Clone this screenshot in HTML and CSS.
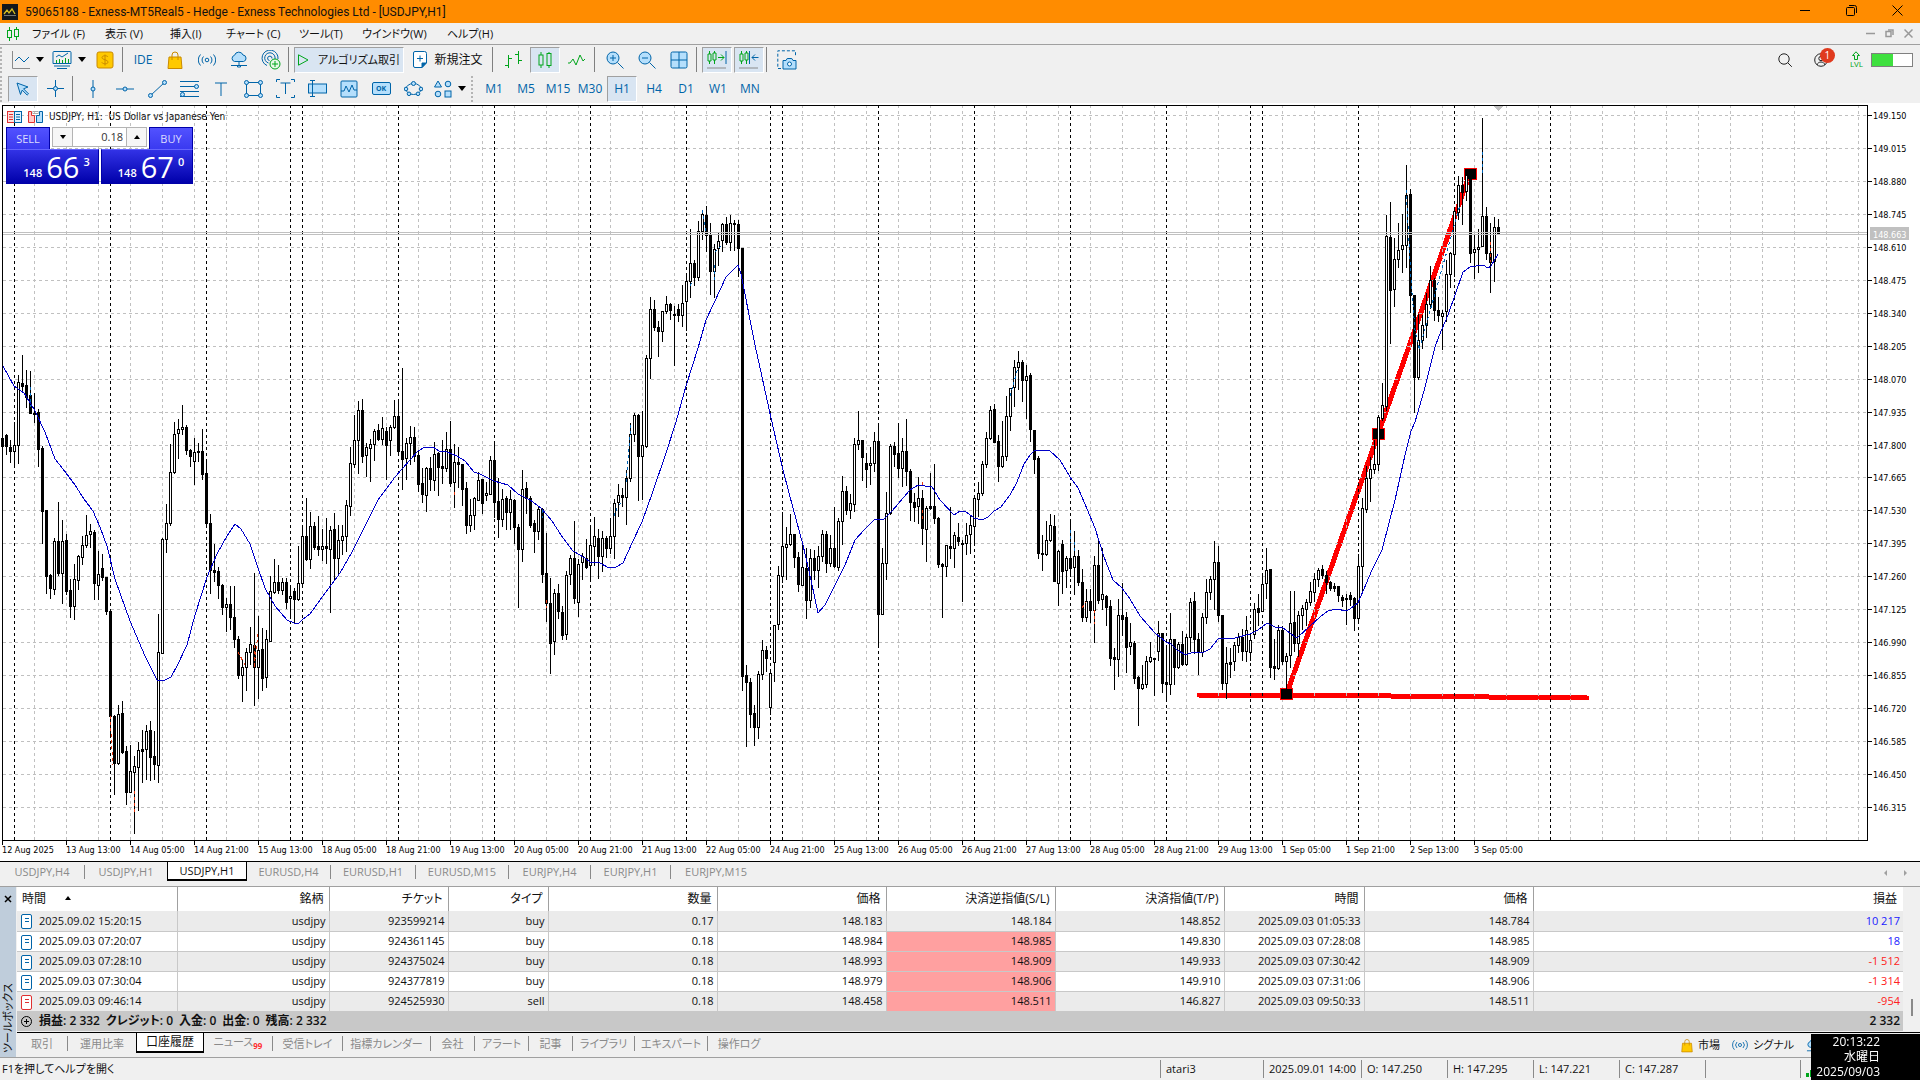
FILE: index.html
```html
<!DOCTYPE html>
<html lang="ja">
<head>
    <meta charset="UTF-8">
    <meta name="viewport" content="width=device-width, initial-scale=1.0">
    <title>59065188 - Exness-MT5Real5 - Hedge - Exness Technologies Ltd - [USDJPY,H1]</title>
    <link rel="stylesheet" href="styles.css">
</head>
<body>
    <header class="titlebar">
        <svg class="app-icon" width="16" height="16" viewBox="0 0 16 16"><rect width="16" height="16" fill="#14181c"/><path d="M2 10l3-4 2 3 3-4 3 5" fill="none" stroke="#d9c021" stroke-width="1.3"/><path d="M2 11.500h12" stroke="#777" stroke-width="1"/></svg>
        <h1>59065188 - Exness-MT5Real5 - Hedge - Exness Technologies Ltd - [USDJPY,H1]</h1>
        <div class="window-buttons">
            <button type="button" aria-label="Minimize"><svg width="11" height="11" viewBox="0 0 11 11"><path d="M0 5.500h10"/></svg></button>
            <button type="button" aria-label="Restore"><svg width="11" height="11" viewBox="0 0 11 11"><rect x=".5" y="2.500" width="8" height="8" rx="1"/><path d="M3 .5h5.500a2 2 0 0 1 2 2V8"/></svg></button>
            <button type="button" aria-label="Close"><svg width="11" height="11" viewBox="0 0 11 11"><path d="M.5.5l10 10M10.500.5l-10 10"/></svg></button>
        </div>
    </header>

    <nav class="menubar">
        <svg width="12" height="14" viewBox="0 0 12 14" fill="none" stroke="#00a51b" stroke-width="1"><path d="M2.500 0v3M2.500 11v3M9.500 0v2M9.500 10v3"/><rect x=".5" y="3.500" width="4" height="7"/><rect x="7.500" y="2.500" width="4" height="7"/></svg>
        <button type="button">ファイル (F)</button>
        <button type="button">表示 (V)</button>
        <button type="button">挿入(I)</button>
        <button type="button">チャート (C)</button>
        <button type="button">ツール(T)</button>
        <button type="button">ウインドウ(W)</button>
        <button type="button">ヘルプ(H)</button>
        <div class="child-buttons">
            <button type="button" aria-label="Minimize chart"><svg width="9" height="9" viewBox="0 0 9 9"><path d="M0 4.500h9"/></svg></button>
            <button type="button" aria-label="Restore chart"><svg width="9" height="9" viewBox="0 0 9 9"><rect x="1" y="2.500" width="5" height="5"/><path d="M3 1h5v5"/></svg></button>
            <button type="button" aria-label="Close chart"><svg width="9" height="9" viewBox="0 0 9 9"><path d="M.5.5l8 8M8.500.5l-8 8"/></svg></button>
        </div>
    </nav>

    <div class="toolbar">
        <span class="grip"></span>
        <button type="button" class="wide" aria-label="Chart type"><svg width="18" height="18" viewBox="0 0 18 18"><path d="M.5 0v17.500H18" stroke="#8a8a8a"/><path d="M3 10l4-4 5 5 5-5"/></svg><i class="arrow"></i></button>
        <button type="button" class="wide" aria-label="Indicators"><svg width="20" height="18" viewBox="0 0 20 18"><path d="M3 12.500h14l2 0v-11a1 1 0 0 0-1-1H2a1 1 0 0 0-1 1v11zM2 15h16M5 17.500h10"/><path d="M4 6l3-2 3 2 6-4"/><path d="M4.500 12V9M7.500 12V8M10.500 12V9M13.500 12V7M16.500 12V8" stroke="#00a51b"/></svg><i class="arrow"></i></button>
        <button type="button" aria-label="Market"><svg width="18" height="18" viewBox="0 0 18 18"><rect x="1" y="1" width="16" height="16" rx="2" fill="#ffc900" stroke="#c98a00"/><path d="M12 6c-1-2-6-1.500-6 .5C6 9 12 8.500 12 11.200c0 2-5 2.200-6.200.2M9 3.500v11" stroke="#c98a00"/></svg></button>
        <span class="sep"></span>
        <button type="button" class="text">IDE</button>
        <button type="button" aria-label="Store"><svg width="16" height="18" viewBox="0 0 16 18"><path d="M2 6h12l1 11.500H1z" fill="#ffc900" stroke="#c98a00"/><path d="M5 9V4a3 3 0 0 1 6 0v5" stroke="#c98a00"/></svg></button>
        <button type="button" aria-label="Signals"><svg width="18" height="14" viewBox="0 0 18 14"><circle cx="9" cy="7" r="1.800"/><path d="M5.500 3.500a5 5 0 0 0 0 7M12.500 3.500a5 5 0 0 1 0 7M2.500 1.500a8 8 0 0 0 0 11M15.500 1.500a8 8 0 0 1 0 11"/></svg></button>
        <button type="button" aria-label="VPS"><svg width="18" height="17" viewBox="0 0 18 17"><path d="M4.500 10.500a3.200 3.200 0 0 1 0-6.200A4.500 4.500 0 0 1 13 4a3.300 3.300 0 0 1 .5 6.500z" fill="#b5dffc"/><path d="M9 10.500v4M1 14.500h16M7.500 14.500h3v1.500h-3z"/></svg></button>
        <button type="button" aria-label="Copy signals"><svg width="20" height="20" viewBox="0 0 20 20"><path d="M6 15.500A8 8 0 1 1 17 9M7.500 13A5.200 5.200 0 1 1 14 9M8.500 10.500a2.200 2.200 0 1 1 2.500-2"/><circle cx="14" cy="14" r="5" fill="#e8f8e8" stroke="#00a51b"/><path d="M14 11v6M11 14h6" stroke="#00a51b"/></svg></button>
        <span class="sep"></span>
        <button type="button" class="algo on"><svg width="11" height="12" viewBox="0 0 11 12"><path d="M.5.800l9.500 5.200-9.500 5.200z" stroke="#00a51b"/></svg>アルゴリズム取引</button>
        <button type="button" class="order"><svg width="14" height="17" viewBox="0 0 14 17"><path d="M2 .5h9.500a2 2 0 0 1 2 2V12L9 16.500H2a1.500 1.500 0 0 1-1.500-1.500V2A1.500 1.500 0 0 1 2 .5z" fill="#fff"/><path d="M13 12H9v4.500z" fill="#0064a8"/><path d="M7 4.500v6M4 7.500h6"/></svg>新規注文</button>
        <span class="sep"></span>
        <button type="button" class="green" aria-label="Bar chart"><svg width="17" height="17" viewBox="0 0 17 17"><path d="M3.500 4v13M3.500 7.500H7M0 14.500h3.500M13.500 0v13M10 3.500h3.500M13.500 9.500H17"/></svg></button>
        <button type="button" class="green on" aria-label="Candlesticks"><svg width="14" height="16" viewBox="0 0 14 16"><path d="M3 0v3M3 13v3M11 0v2M11 14v2"/><rect x="1" y="3" width="4" height="10"/><rect x="9" y="1.500" width="4" height="12"/></svg></button>
        <button type="button" class="green" aria-label="Line chart"><svg width="18" height="12" viewBox="0 0 18 12"><path d="M0 9h2l3-4 3 6 4-10 3 6 2-2"/></svg></button>
        <span class="sep"></span>
        <button type="button" aria-label="Zoom in"><svg width="18" height="18" viewBox="0 0 18 18"><circle cx="7" cy="7" r="6" fill="#b5dffc"/><path d="M11.500 11.500l6 6M7 4v6M4 7h6"/></svg></button>
        <button type="button" aria-label="Zoom out"><svg width="18" height="18" viewBox="0 0 18 18"><circle cx="7" cy="7" r="6" fill="#b5dffc"/><path d="M11.500 11.500l6 6M4 7h6"/></svg></button>
        <button type="button" aria-label="Tile windows"><svg width="18" height="18" viewBox="0 0 18 18"><rect x="1" y="1" width="16" height="16" rx="1.500" fill="#b5dffc"/><path d="M9 1v16M1 9h16"/></svg></button>
        <span class="sep"></span>
        <button type="button" class="on" aria-label="Auto scroll"><svg width="20" height="19" viewBox="0 0 20 19"><path d="M2.500 1v13M7.500 1v13" stroke="#00a51b"/><path d="M1 4h3v7H1zM6 3h3v7H6zM11 7.500h6M14 4.500l3 3-3 3" stroke="#00a51b" fill="#d9e5f2"/><path d="M19 1v13"/><path d="M0 18h19" stroke="#8a8a8a"/></svg></button>
        <button type="button" class="on" aria-label="Chart shift"><svg width="20" height="19" viewBox="0 0 20 19"><path d="M2.500 1v13M7.500 1v13" stroke="#00a51b"/><path d="M1 4h3v7H1zM6 3h3v7H6z" stroke="#00a51b" fill="#d9e5f2"/><path d="M10.500 1v13M13 7.500h6.500M16 4.500l-3 3 3 3"/><path d="M0 18h19" stroke="#8a8a8a"/></svg></button>
        <span class="sep"></span>
        <button type="button" aria-label="Screenshot"><svg width="20" height="20" viewBox="0 0 20 20"><path d="M4 18.500H.8V.8h17.700V7" stroke-dasharray="3 2"/><path d="M6 10.500h3l1.200-2h4.600l1.200 2h3v8.500H6z" fill="#b5dffc"/><circle cx="12.500" cy="14" r="2" fill="#fff"/></svg></button>
        <div class="account">
            <button type="button" aria-label="Search"><svg width="14" height="14" viewBox="0 0 14 14"><circle cx="6" cy="6" r="5.200"/><path d="M9.800 9.800l4 4"/></svg></button>
            <button type="button" class="user" aria-label="Account"><svg width="14" height="14" viewBox="0 0 14 14"><circle cx="7" cy="7" r="6.300"/><circle cx="7" cy="5.500" r="2.200"/><path d="M3 12c1-4 7-4 8 0"/></svg><span class="badge">1</span></button>
            <span class="level"><svg width="8" height="9" viewBox="0 0 8 9"><path d="M.5 4.500L4 .8l3.500 3.700H5.500V8.500h-3v-4z"/></svg>LVL</span>
            <span class="battery"><span class="charge"></span></span>
        </div>
    </div>

    <div class="toolbar">
        <span class="grip"></span>
        <button type="button" class="on" aria-label="Cursor"><svg width="14" height="14" viewBox="0 0 14 14"><path d="M1 1l11 4-4.500 1.800 5 5-1.300 1.300-5-5L4.500 12.500z" fill="#b5dffc"/></svg></button>
        <button type="button" aria-label="Crosshair"><svg width="17" height="17" viewBox="0 0 17 17"><path d="M8.500 0v17M0 8.500h17"/><circle cx="8.500" cy="8.500" r="2" fill="#b5dffc"/></svg></button>
        <span class="sep"></span>
        <button type="button" aria-label="Vertical line"><svg width="18" height="18" viewBox="0 0 18 18"><path d="M9 0v18"/><circle cx="9" cy="9" r="2" fill="#b5dffc"/></svg></button>
        <button type="button" aria-label="Horizontal line"><svg width="18" height="18" viewBox="0 0 18 18"><path d="M0 9h18"/><circle cx="9" cy="9" r="2" fill="#b5dffc"/></svg></button>
        <button type="button" aria-label="Trend line"><svg width="19" height="18" viewBox="0 0 19 18"><path d="M2 16L17 2"/><circle cx="2.500" cy="15.500" r="2" fill="#b5dffc"/><circle cx="16.500" cy="2.500" r="2" fill="#b5dffc"/></svg></button>
        <button type="button" aria-label="Fibonacci"><svg width="19" height="18" viewBox="0 0 19 18"><path d="M0 1.500h19M0 6.500h19M0 11.500h19M0 16.500h19"/><circle cx="16.500" cy="6.500" r="2" fill="#b5dffc"/><circle cx="2.500" cy="14.500" r="2" fill="#b5dffc"/></svg></button>
        <button type="button" aria-label="Text"><svg width="14" height="14" viewBox="0 0 14 14"><path d="M1 1h12M7 1v13"/></svg></button>
        <button type="button" aria-label="Rectangle"><svg width="19" height="18" viewBox="0 0 19 18"><rect x="2.500" y="2.500" width="14" height="13"/><g fill="#b5dffc"><circle cx="2.500" cy="2.500" r="2"/><circle cx="16.500" cy="2.500" r="2"/><circle cx="2.500" cy="15.500" r="2"/><circle cx="16.500" cy="15.500" r="2"/></g></svg></button>
        <button type="button" aria-label="Text label"><svg width="19" height="19" viewBox="0 0 19 19"><path d="M.5 3V.5H4M.5 16v2.500H4M18.500 3V.5H15M18.500 16v2.500H15M4.500 4h10M9.500 4v11"/></svg></button>
        <button type="button" aria-label="Edit field"><svg width="19" height="17" viewBox="0 0 19 17"><rect x=".5" y="4" width="18" height="9" fill="#b5dffc"/><path d="M4.500 1v15M2 .5h5M2 16.500h5"/></svg></button>
        <button type="button" aria-label="Chart object"><svg width="18" height="18" viewBox="0 0 18 18"><rect x="1" y="1" width="16" height="16" rx="1" fill="#b5dffc"/><path d="M1 11h3l2-5 3 6 3-7 2 5h3"/></svg></button>
        <button type="button" aria-label="Button object"><span class="ok">OK</span></button>
        <button type="button" aria-label="Ellipse"><svg width="19" height="16" viewBox="0 0 19 16"><ellipse cx="9.500" cy="8" rx="7.500" ry="5.500"/><g fill="#b5dffc"><circle cx="9.500" cy="2.500" r="2"/><circle cx="2" cy="8" r="1.800"/><circle cx="17" cy="8" r="1.800"/><circle cx="5" cy="12.800" r="1.800"/><circle cx="14" cy="12.800" r="1.800"/></g></svg></button>
        <button type="button" class="wide" aria-label="Shapes"><svg width="18" height="18" viewBox="0 0 18 18"><g fill="#b5dffc"><path d="M4 1l3.500 6h-7z"/><circle cx="14" cy="4" r="2.800"/><circle cx="4" cy="14" r="2.800"/><rect x="11" y="11" width="6" height="6"/></g></svg><i class="arrow"></i></button>
        <span class="grip"></span>
        <button type="button" class="text">M1</button>
        <button type="button" class="text">M5</button>
        <button type="button" class="text">M15</button>
        <button type="button" class="text">M30</button>
        <button type="button" class="text on">H1</button>
        <button type="button" class="text">H4</button>
        <button type="button" class="text">D1</button>
        <button type="button" class="text">W1</button>
        <button type="button" class="text">MN</button>
    </div>

    <main class="chart">
        <svg class="plot" id="plot" role="img" aria-label="USDJPY H1"></svg>
        <div class="chart-title">
            <svg width="15" height="12" viewBox="0 0 15 12" fill="none"><rect x=".5" y=".5" width="7" height="11" fill="#fde0e0" stroke="#e03030"/><rect x="7.500" y=".5" width="7" height="11" fill="#e0f0fd" stroke="#0064a8"/><path d="M2 3.500h4M2 6h4M2 8.500h4" stroke="#e03030"/><path d="M9 3.500h4M9 6h4M9 8.500h4" stroke="#0064a8"/></svg>
            <svg width="15" height="12" viewBox="0 0 15 12"><path d="M.5.5h3v4h3v7h-6z" fill="#ffc9c9" stroke="#e03030"/><path d="M14.500.5h-3v4h-3v7h6z" fill="#b5dffc" stroke="#0064a8"/><rect x="5" y=".5" width="5" height="2" fill="none" stroke="#aaa"/></svg>
            <span>USDJPY, H1:&nbsp; US Dollar vs Japanese Yen</span>
        </div>
        <form class="one-click" onsubmit="event.preventDefault()">
            <button type="submit" class="side sell">SELL</button>
            <div class="volume">
                <button type="button" aria-label="Decrease volume"><i class="arrow"></i></button>
                <input type="text" value="0.18" aria-label="Volume">
                <button type="button" aria-label="Increase volume"><i class="arrow up"></i></button>
            </div>
            <button type="submit" class="side buy">BUY</button>
            <div class="quote"><small>148</small><b>66</b><sup>3</sup></div>
            <div class="quote"><small>148</small><b>67</b><sup>0</sup></div>
        </form>
    </main>

    <nav class="chart-tabs">
        <button type="button">USDJPY,H4</button>
        <button type="button">USDJPY,H1</button>
        <button type="button" class="active">USDJPY,H1</button>
        <button type="button">EURUSD,H4</button>
        <button type="button">EURUSD,H1</button>
        <button type="button">EURUSD,M15</button>
        <button type="button">EURJPY,H4</button>
        <button type="button">EURJPY,H1</button>
        <button type="button">EURJPY,M15</button>
        <span class="scroller"><i></i><i></i></span>
    </nav>

    <section class="toolbox">
        <div class="toolbox-side">
            <button type="button" aria-label="Close toolbox"><svg width="8" height="8" viewBox="0 0 8 8"><path d="M1 1l6 6M7 1L1 7" stroke="#000" stroke-width="1.500"/></svg></button>
            <span>ツールボックス</span>
        </div>
        <div class="toolbox-main">
            <div class="history-wrap">
                <table class="history">
                    <colgroup>
                        <col class="w160"><col class="w152"><col class="w119"><col class="w100"><col class="w169"><col class="w169"><col class="w169"><col class="w169"><col class="w140"><col class="w169"><col>
                    </colgroup>
                    <thead>
                        <tr><th>時間<i class="arrow up"></i></th><th>銘柄</th><th>チケット</th><th>タイプ</th><th>数量</th><th>価格</th><th>決済逆指値(S/L)</th><th>決済指値(T/P)</th><th>時間</th><th>価格</th><th>損益</th></tr>
                    </thead>
                    <tbody>
                        <tr><td><i class="doc"></i>2025.09.02 15:20:15</td><td>usdjpy</td><td>923599214</td><td>buy</td><td>0.17</td><td>148.183</td><td>148.184</td><td>148.852</td><td>2025.09.03 01:05:33</td><td>148.784</td><td class="plus">10 217</td></tr>
                        <tr><td><i class="doc"></i>2025.09.03 07:20:07</td><td>usdjpy</td><td>924361145</td><td>buy</td><td>0.18</td><td>148.984</td><td class="hit">148.985</td><td>149.830</td><td>2025.09.03 07:28:08</td><td>148.985</td><td class="plus">18</td></tr>
                        <tr><td><i class="doc"></i>2025.09.03 07:28:10</td><td>usdjpy</td><td>924375024</td><td>buy</td><td>0.18</td><td>148.993</td><td class="hit">148.909</td><td>149.933</td><td>2025.09.03 07:30:42</td><td>148.909</td><td class="minus">-1 512</td></tr>
                        <tr><td><i class="doc"></i>2025.09.03 07:30:04</td><td>usdjpy</td><td>924377819</td><td>buy</td><td>0.18</td><td>148.979</td><td class="hit">148.906</td><td>149.910</td><td>2025.09.03 07:31:06</td><td>148.906</td><td class="minus">-1 314</td></tr>
                        <tr><td><i class="doc red"></i>2025.09.03 09:46:14</td><td>usdjpy</td><td>924525930</td><td>sell</td><td>0.18</td><td>148.458</td><td class="hit">148.511</td><td>146.827</td><td>2025.09.03 09:50:33</td><td>148.511</td><td class="minus">-954</td></tr>
                    </tbody>
                    <tfoot>
                        <tr><td colspan="10"><svg width="11" height="11" viewBox="0 0 11 11" fill="none" stroke="#000"><circle cx="5.500" cy="5.500" r="5"/><path d="M5.500 3v5M3 5.500h5"/></svg>損益: 2 332&ensp;クレジット: 0&ensp;入金: 0&ensp;出金: 0&ensp;残高: 2 332</td><td>2 332</td></tr>
                    </tfoot>
                </table>
                <div class="scrollbar"><span></span></div>
            </div>
            <nav class="toolbox-tabs">
                <button type="button">取引</button>
                <button type="button">運用比率</button>
                <button type="button" class="active">口座履歴</button>
                <button type="button">ニュース<sub>99</sub></button>
                <button type="button">受信トレイ</button>
                <button type="button">指標カレンダー</button>
                <button type="button">会社</button>
                <button type="button">アラート</button>
                <button type="button">記事</button>
                <button type="button">ライブラリ</button>
                <button type="button">エキスパート</button>
                <button type="button">操作ログ</button>
                <div class="services">
                    <a href="#"><svg width="12" height="15" viewBox="0 0 16 18"><path d="M2 6h12l1 11.500H1z" fill="#ffc900" stroke="#c98a00"/><path d="M5 9V4a3 3 0 0 1 6 0v5" fill="none" stroke="#c98a00"/></svg>市場</a>
                    <a href="#"><svg width="16" height="12" viewBox="0 0 18 14" fill="none" stroke="#0064a8"><circle cx="9" cy="7" r="1.800"/><path d="M5.500 3.500a5 5 0 0 0 0 7M12.500 3.500a5 5 0 0 1 0 7M2.500 1.500a8 8 0 0 0 0 11M15.500 1.500a8 8 0 0 1 0 11"/></svg>シグナル</a>
                    <a href="#" aria-label="VPS"><svg width="16" height="15" viewBox="0 0 18 17" fill="#b5dffc" stroke="#0064a8"><path d="M4.500 10.500a3.200 3.200 0 0 1 0-6.200A4.500 4.500 0 0 1 13 4a3.300 3.300 0 0 1 .5 6.500zM9 10.500v4M1 14.500h16"/></svg></a>
                </div>
            </nav>
        </div>
    </section>

    <footer class="statusbar">
        <span>F1を押してヘルプを開く</span>
        <span>atari3</span>
        <span>2025.09.01 14:00</span>
        <span>O: 147.250</span>
        <span>H: 147.295</span>
        <span>L: 147.221</span>
        <span>C: 147.287</span>
        <span></span>
        <span><svg width="18" height="14" viewBox="0 0 18 14" fill="#00a51b"><path d="M0 10h3v4H0zM4 7h3v7H4zM8 4h3v10H8zM12 1h3v13h-3z"/></svg></span>
    </footer>

    <div class="clock">
        <span>20:13:22</span>
        <span>水曜日</span>
        <span>2025/09/03</span>
    </div>

    <script src="chart.js"></script>
</body>
</html>
```

FILE: styles.css
```css
* {
    box-sizing: border-box;
}
body {
    display: flex;
    flex-direction: column;
    height: 100vh;
    margin: 0;
    overflow: hidden;
    background-color: #f0f0f0;
    color: #111;
    font-family: "Open Sans", "Noto Sans CJK JP", sans-serif;
    font-size: 11px;
    line-height: 16px;
    font-feature-settings: "palt";
}
button {
    margin: 0;
    padding: 0;
    border: none;
    background: none;
    color: inherit;
    font: inherit;
    white-space: nowrap;
}
.arrow {
    display: inline-block;
    border: 4px solid transparent;
    border-top-color: #000;
    border-bottom-width: 0;
}
.arrow.up {
    border-width: 0 3px 4px;
    border-color: transparent transparent #000;
}

/* title bar */
.titlebar {
    display: flex;
    align-items: center;
    height: 23px;
    padding-left: 2px;
    background-color: #ff8c00;
}
.titlebar h1 {
    flex: 1;
    margin: 0 0 0 7px;
    font-family: Roboto, "Open Sans", sans-serif;
    font-size: 12px;
    font-weight: normal;
}
.window-buttons {
    display: flex;
}
.window-buttons button {
    width: 46px;
    height: 23px;
}
.window-buttons svg {
    fill: none;
    stroke: #000;
}

/* menu */
.menubar {
    display: grid;
    grid-template-columns: 25px 73px 65px 56px 73px 63px 85px 60px 1fr;
    align-items: center;
    height: 22px;
    padding: 0 2px 0 7px;
    border-bottom: 1px solid #a0a0a0;
}
.menubar > button {
    text-align: left;
}
.child-buttons {
    display: flex;
    justify-content: flex-end;
}
.child-buttons button {
    width: 19px;
}
.child-buttons svg {
    fill: none;
    stroke: #999;
    stroke-width: 1.5;
}

/* toolbars */
.toolbar {
    display: flex;
    align-items: center;
    gap: 2px;
    height: 29px;
    color: #0064a8;
    font-size: 12px;
}
.toolbar button {
    display: flex;
    align-items: center;
    justify-content: center;
    width: 30px;
    height: 26px;
    border: 1px solid transparent;
}
.toolbar svg {
    fill: none;
    stroke: #0064a8;
}
.toolbar .green svg,
.toolbar .level svg {
    stroke: #00a51b;
}
.toolbar .account button svg {
    stroke: #222;
}
.toolbar .wide {
    gap: 6px;
    width: 39px;
}
.toolbar .wide .arrow {
    border-width: 5px 4px 0;
}
.toolbar .on {
    border-color: #a0a0a0 #fff #fff #a0a0a0;
    background-color: #d9e5f2;
}
.toolbar .algo {
    gap: 9px;
    width: 110px;
    color: #111;
    font-size: 11px;
}
.toolbar .order {
    gap: 7px;
    width: 84px;
    color: #111;
}
.grip {
    width: 6px;
    height: 26px;
    border-left: 2px dotted #b4b4b4;
    background-clip: content-box;
}
.sep {
    width: 4px;
    height: 25px;
    border-left: 1px solid #808080;
}
.ok {
    width: 19px;
    border: 1px solid #0064a8;
    border-radius: 2px;
    background-color: #b5dffc;
    font-size: 7px;
    font-weight: bold;
    line-height: 11px;
}
.account {
    display: flex;
    align-items: center;
    gap: 8px;
    margin-left: auto;
    padding-right: 7px;
}
.toolbar .user {
    position: relative;
    width: 26px;
}
.badge {
    position: absolute;
    top: 0;
    right: -2px;
    width: 15px;
    height: 15px;
    border-radius: 50%;
    background-color: #e03a1e;
    color: #fff;
    font-size: 10px;
    line-height: 15px;
}
.level {
    display: flex;
    flex-direction: column;
    align-items: center;
    margin-left: 8px;
    color: #00a51b;
    font-size: 8px;
    line-height: 8px;
}
.battery {
    width: 42px;
    height: 14px;
    border: 1px solid #808080;
    background-color: #fff;
}
.charge {
    display: block;
    width: 52%;
    height: 100%;
    background-color: #3fe03f;
}

/* chart */
.chart {
    position: relative;
    flex: 1;
    min-height: 0;
    border-top: 1px solid #fff;
    border-bottom: 1px solid #000;
    background-color: #fff;
}
.plot {
    display: block;
    width: 100%;
    height: 100%;
    font-family: "DejaVu Sans Condensed", "DejaVu Sans", sans-serif;
    font-size: 9px;
}
.chart-title {
    position: absolute;
    top: 5px;
    left: 7px;
    display: flex;
    align-items: center;
    gap: 6px;
    font-family: "DejaVu Sans Condensed", "DejaVu Sans", sans-serif;
    font-size: 10px;
}
.one-click {
    position: absolute;
    top: 23px;
    left: 6px;
    display: grid;
    grid-template-columns: 44px 49px 2px 48px 44px;
    grid-template-rows: 22px 35px;
    color: #fff;
}
.side {
    border: 1px solid #0000a8;
    border-bottom: none;
    background: linear-gradient(#5252ff, #3a3af0);
    color: #dcdcff;
    font-size: 11px;
}
.buy {
    grid-column: 5;
}
.volume {
    display: flex;
    grid-column: 2 / 5;
    margin: 0 2px 2px;
    border: 1px solid #b4b4b4;
    background-color: #fff;
}
.volume button {
    display: flex;
    align-items: center;
    justify-content: center;
    width: 19px;
    background-color: #f6f6f6;
}
.volume .arrow {
    border-width: 4px 3px 0;
}
.volume .arrow.up {
    border-width: 0 3px 4px;
}
.volume input {
    flex: 1;
    width: 0;
    padding: 0 3px;
    border: solid #b4b4b4;
    border-width: 0 1px;
    color: #333;
    font: inherit;
    text-align: right;
}
.quote {
    display: flex;
    align-items: flex-end;
    justify-content: center;
    gap: 4px;
    grid-column: 1 / 3;
    padding: 0 0 3px 8px;
    border: 1px solid #0000a8;
    border-top-color: #6464ff;
    background: linear-gradient(#3232e6, #0000aa);
}
.quote:last-child {
    grid-column: 4 / 6;
}
.quote small {
    font-size: 11px;
    font-weight: 600;
    line-height: 14px;
}
.quote b {
    font-size: 29px;
    font-weight: normal;
    line-height: 27px;
}
.quote sup {
    align-self: flex-start;
    font-size: 11px;
    font-weight: 600;
    line-height: 24px;
}

/* chart tabs */
.chart-tabs {
    display: grid;
    grid-template-columns: 85px 82px 80px 84px 85px 93px 82px 80px 90px 1fr;
    height: 25px;
    border-bottom: 1px solid #a0a0a0;
    color: #8a8a8a;
}
.chart-tabs button {
    height: 14px;
    margin-top: 3px;
    border-right: 1px solid #8a8a8a;
    line-height: 14px;
}
.chart-tabs button:nth-child(2),
.chart-tabs button:nth-child(9) {
    border-right: none;
}
.chart-tabs .active {
    height: 19px;
    margin-top: 0;
    border: 1px solid #000;
    border-top: none;
    border-bottom-width: 2px;
    background-color: #fff;
    color: #111;
    line-height: 17px;
}
.scroller {
    display: flex;
    justify-content: flex-end;
    gap: 17px;
    padding: 8px 13px 0 0;
}
.scroller i {
    width: 0;
    height: 0;
    border: 3px solid transparent;
    border-left: none;
    border-right-color: #a0a0a0;
}
.scroller i + i {
    border-right: none;
    border-left: 3px solid #a0a0a0;
}

/* toolbox */
.toolbox {
    display: flex;
    border-bottom: 1px solid #a0a0a0;
}
.toolbox-side {
    display: flex;
    flex-direction: column;
    align-items: center;
    justify-content: space-between;
    width: 16px;
    margin-right: 1px;
    padding: 4px 0;
    background-color: #bfcddb;
}
.toolbox-side span {
    font-size: 11px;
    writing-mode: vertical-rl;
    text-orientation: sideways;
    transform: rotate(180deg);
    white-space: nowrap;
}
.toolbox-main {
    flex: 1;
    min-width: 0;
}
.history-wrap {
    display: flex;
    padding-bottom: 1px;
    border-bottom: 1px solid #000;
}
.history {
    flex: 1;
    width: 0;
    border-collapse: collapse;
    table-layout: fixed;
    background-color: #fff;
}
.w160 { width: 160px; }
.w152 { width: 152px; }
.w119 { width: 119px; }
.w100 { width: 100px; }
.w169 { width: 169px; }
.w140 { width: 140px; }
.history th {
    height: 24px;
    padding: 0 5px;
    border-right: 1px solid #a0a0a0;
    font-size: 12px;
    font-weight: normal;
    text-align: right;
    white-space: nowrap;
}
.history th:first-child,
.history td:first-child {
    text-align: left;
}
.history th .arrow {
    margin: 0 0 3px 19px;
}
.history td {
    height: 20px;
    padding: 0 3px;
    border-right: 1px solid #c8c8c8;
    border-bottom: 1px solid #c8c8c8;
    line-height: 18px;
    text-align: right;
    white-space: nowrap;
}
.history th:last-child,
.history td:last-child {
    border-right: none;
}
.history th:last-child {
    padding-right: 6px;
}
.history tbody tr:nth-child(odd) {
    background-color: #ebebeb;
}
.history .hit {
    background-color: #ffa0a0;
}
.plus {
    color: #2020ff;
}
.minus {
    color: #ff2020;
}
.doc {
    display: inline-block;
    width: 11px;
    height: 15px;
    margin: 0 7px 0 1px;
    border: 1px solid #0064a8;
    border-radius: 2px;
    background: linear-gradient(#0064a8, #0064a8) center 3px / 4px 1px no-repeat,
        linear-gradient(#0064a8, #0064a8) center 6px / 4px 1px no-repeat #fff;
    vertical-align: middle;
}
.doc.red {
    border-color: #e03030;
    background: linear-gradient(#e03030, #e03030) center 3px / 4px 1px no-repeat,
        linear-gradient(#e03030, #e03030) center 6px / 4px 1px no-repeat #fff;
}
.history tfoot td {
    border: none;
    background-color: #c8c8c8;
    font-size: 12px;
    font-weight: 600;
}
.history tfoot svg {
    margin: 0 7px 0 1px;
    vertical-align: -2px;
}
.scrollbar {
    display: flex;
    align-items: flex-end;
    justify-content: center;
    width: 17px;
    padding-bottom: 15px;
}
.scrollbar span {
    width: 2px;
    height: 17px;
    background-color: #8a8a8a;
}
.toolbox-tabs {
    display: grid;
    grid-template-columns: 51px 68px 68px 69px 70px 88px 44px 54px 44px 62px 73px 62px 1fr;
    height: 24px;
    color: #8a8a8a;
}
.toolbox-tabs button {
    height: 15px;
    margin-top: 3px;
    border-right: 1px solid #8a8a8a;
    line-height: 12px;
}
.toolbox-tabs button:nth-child(2),
.toolbox-tabs button:nth-child(12) {
    border-right: none;
}
.toolbox-tabs .active {
    height: 20px;
    margin-top: 0;
    border: 1px solid #000;
    border-top: none;
    border-bottom-width: 2px;
    background-color: #fff;
    color: #111;
    font-size: 12px;
    line-height: 18px;
}
.toolbox-tabs sub {
    color: #ff3030;
    font-size: 8px;
    font-weight: bold;
    line-height: 1;
}
.services {
    display: flex;
    align-items: center;
    justify-content: flex-end;
    gap: 12px;
    padding-right: 98px;
}
.services a {
    display: flex;
    align-items: center;
    gap: 5px;
    color: #111;
    text-decoration: none;
}

/* status bar */
.statusbar {
    display: grid;
    grid-template-columns: 1fr 103px 98px 86px 86px 86px 86px 95px 120px;
    height: 22px;
    padding-top: 2px;
    line-height: 18px;
}
.statusbar span {
    height: 18px;
    padding-left: 5px;
    border-left: 1px solid #8a8a8a;
    white-space: nowrap;
}
.statusbar span:first-child {
    padding-left: 2px;
    border-left: none;
}
.statusbar svg {
    vertical-align: middle;
}

/* desktop clock, always above the window */
.clock {
    position: fixed;
    right: 0;
    bottom: 0;
    display: flex;
    flex-direction: column;
    align-items: flex-end;
    width: 109px;
    height: 46px;
    padding-right: 40px;
    background-color: #000;
    color: #fff;
    font-size: 12px;
    line-height: 15px;
}
```

FILE: chart.js
```javascript
// Each candle: direction (u = hollow, d = filled), high, body top, body bottom, low.
// Values are heights in the window, one candle every 4px.
const candles = `
d434,438,446,446 d434,435,446,454 d440,447,451,462 u422,445,451,467 u375,382,445,463 d355,383,386,390 d370,385,397,407 d371,395,413,413
d393,413,414,422 d409,412,449,466 d446,448,511,543 d510,510,576,593 d574,575,588,598 u538,541,589,594 d502,541,573,575 u520,541,573,603
d534,540,591,594 d579,590,606,617 u564,579,606,619 u555,556,580,589 u536,545,557,564 u515,535,545,547 u524,531,534,547 d530,532,583,599
u551,574,585,599 d554,568,577,580 d577,577,611,614 d610,611,716,737 d715,716,763,794 u705,714,763,764 d701,713,752,753 d746,751,792,804
u745,771,792,792 u756,766,772,833 u742,750,767,810 d730,749,751,782 u725,731,749,779 d721,730,757,780 d731,756,764,779 u614,652,765,782
u538,539,653,653 u504,523,539,552 u444,472,523,525 u422,434,472,473 u419,429,433,458 u405,427,429,434 d425,427,450,454 d449,450,456,466
u438,452,461,484 d443,451,452,461 d429,451,474,479 d459,473,523,524 d514,523,570,593 d544,570,572,581 d567,571,585,598 d584,585,607,614
u598,604,607,631 d586,604,617,629 d586,617,639,647 d636,639,675,678 u660,667,675,701 u648,652,667,690 u627,644,652,664 d573,645,667,705
u616,650,667,698 d628,649,678,690 u630,639,677,687 u576,591,641,641 u559,582,592,593 d565,582,590,593 u578,582,590,594 d578,582,602,608
u586,596,598,618 d588,591,599,623 u546,583,599,600 u525,536,583,585 d498,536,559,560 u512,526,559,568 d522,526,547,549 d516,546,549,555
u529,546,549,560 d518,546,548,563 u526,530,549,612 d513,529,558,579 u525,540,558,573 u525,536,540,554 u500,505,536,551 u447,463,506,515
u415,440,464,467 u401,410,440,473 d399,410,456,462 u443,447,455,476 u439,444,448,481 u429,431,444,460 d424,430,439,440 u417,428,439,444
d427,431,445,479 u425,427,440,455 u400,416,427,428 d399,416,451,455 d368,451,459,489 u438,443,458,479 u426,437,443,464 d427,437,456,461
d450,455,484,491 d468,483,494,502 u467,468,495,511 d457,468,479,490 u442,454,480,490 d452,453,467,495 d440,466,468,483 u432,449,468,471
d421,449,483,486 u444,462,482,507 d447,462,464,487 d464,464,489,505 d482,488,525,533 u499,515,525,531 u497,498,515,529 u472,480,500,500
d479,479,503,513 u482,493,495,500 u456,460,494,494 d441,460,502,517 d478,501,519,537 u489,499,519,526 d496,498,512,529 u490,499,512,529
d499,500,527,543 d524,527,549,607 u470,489,549,561 d482,488,498,513 d496,498,525,527 d520,523,531,552 u506,509,531,539 d508,509,574,582
d533,573,603,621 d578,603,643,673 u589,593,641,654 d584,593,611,618 d606,612,635,639 u571,575,634,639 u555,558,574,584 d521,558,598,603
u559,564,602,616 u553,556,562,579 d539,558,567,568 u525,545,565,580 u517,536,546,565 d529,538,556,578 u531,538,556,571 d536,538,548,557
u518,536,548,553 u499,503,536,558 u484,495,502,516 d488,495,497,506 u470,478,497,524 u423,434,478,481 u413,415,434,441 d414,415,456,500
u411,445,456,499 u355,358,446,447 u297,309,358,378 d300,309,327,330 d321,327,331,356 u311,311,331,341 u296,304,311,313 d303,304,310,319
d306,314,315,365 d304,309,315,321 u285,303,315,326 u273,281,301,330 u229,263,281,297 d260,263,277,285 u221,231,277,280 u210,214,231,239
d206,215,235,251 d223,234,271,294 u244,249,271,297 u232,241,248,265 u223,224,240,251 d217,224,242,244 u215,223,242,250 d220,223,224,250
d220,224,248,276 d248,248,676,690 d665,675,682,746 d678,682,714,727 d705,713,727,745 u671,674,727,738 u640,650,674,679 d646,650,658,671
u669,673,707,714 u625,625,662,681 u566,575,624,629 u512,546,576,582 u527,544,547,579 u514,534,544,545 d534,534,557,567 d552,557,584,591
u545,567,585,585 d548,568,600,618 u549,558,600,607 d550,558,570,579 u546,556,570,587 u530,534,556,561 d531,534,563,572 u535,548,563,566
d507,548,566,567 u518,521,567,570 u476,491,521,544 d486,491,510,514 u494,503,510,518 u438,444,504,511 u411,440,444,449 d440,440,457,480
d453,463,469,487 u447,463,465,484 u432,441,463,471 d423,441,614,644 u548,563,614,614 u492,513,563,579 u444,446,513,514 d442,446,454,466
d423,453,468,477 u438,451,468,486 d419,451,471,485 d469,471,502,520 d493,502,507,521 u477,498,506,523 d490,498,528,544 u506,508,529,561
d473,506,508,509 d464,506,518,523 d517,518,564,567 d563,564,566,617 u545,545,566,576 d507,546,548,558 u532,535,548,567 d523,537,541,545
d540,543,544,601 u523,535,543,554 u515,525,534,553 u495,498,526,543 u482,493,499,516 u461,464,493,495 u432,438,464,467 u406,410,438,439
d404,409,442,442 d435,441,466,481 u421,456,466,467 u396,416,456,460 u388,388,416,430 u360,367,387,406 u351,362,367,389 d360,362,380,401
u365,376,380,418 d373,375,429,441 d430,430,459,473 d456,458,553,558 d535,553,554,570 u521,540,554,555 u514,525,540,541 d515,526,581,581
u550,551,583,605 d540,544,571,593 u556,558,570,587 d519,558,568,576 u531,556,567,594 d550,556,582,585 d569,582,617,621 u589,601,617,621
d589,601,610,622 u556,565,610,642 d541,565,600,603 u548,594,599,609 d595,596,607,625 d600,606,658,665 d648,657,659,689 u599,615,659,676
d583,615,619,635 d612,617,647,672 u623,642,646,654 d641,643,678,683 d676,677,688,725 u665,684,688,689 u656,661,684,687 u642,657,661,662
d658,658,659,695 u621,633,651,660 d633,633,683,692 d645,682,684,701 u613,639,684,694 d639,639,667,684 u642,644,667,668 d631,644,664,665
u634,637,664,665 u598,602,637,651 d592,601,639,653 d633,639,652,674 u613,617,652,656 u579,592,617,623 u576,579,592,599 u541,562,579,609
d546,562,615,621 d615,615,683,689 u647,663,683,698 d648,662,664,677 u642,645,661,670 u633,637,645,652 d629,637,651,660 u616,630,651,661
u636,640,652,660 u603,609,634,638 d594,608,612,625 u573,584,611,611 u548,570,583,598 d569,569,667,677 d639,666,668,679 u625,630,668,669
d626,630,661,664 u653,656,661,694 u591,623,655,667 d591,622,643,651 u611,615,643,656 u605,608,615,629 u599,602,609,625 u582,591,602,605
u573,579,592,601 u568,570,579,586 d565,569,575,578 d571,575,582,593 d581,582,588,590 d583,586,588,591 d586,586,595,601 d595,597,600,606
d594,598,599,624 d592,595,599,605 d597,598,618,630 u554,566,618,620 u498,508,566,593 u466,478,509,512 u457,469,478,501 u440,464,469,473
u415,417,464,470 u383,405,418,420 u215,236,406,410 d202,237,290,343 u238,259,289,306 u223,250,259,267 u214,245,249,272 u165,195,245,267
d189,194,295,312 d295,295,377,412 u314,340,377,379 u315,325,340,348 u293,304,325,337 u266,280,304,308 d278,280,310,320 d297,310,315,321
u310,313,316,349 u260,274,311,321 u252,253,274,287 u208,211,254,276 u176,185,212,219 d177,185,192,224 u173,175,191,200 d171,173,253,262
u235,249,252,278 u229,247,249,272 u118,216,246,246 d207,216,253,259 d223,253,262,292 u217,227,261,281 d219,227,234,234
`.trim().split(/\s+/);

const average = `3,366 14,386 24,393 34,409 45,432 55,459 63,469 75,485 84,499 93,511 100,527 107,546 115,579 130,621 145,656 157,680 163,681
171,677 177,666 187,645 195,615 207,577 217,554 227,536 235,524 241,529 250,544 258,568 265,588 275,606 287,620 294,623 299,623 303,619
310,614 320,600 340,573 352,552 378,500 395,477 410,460 418,451 425,447 433,447 439,451 447,452 457,456 465,461 474,472 480,474
494,481 508,485 518,494 530,500 541,508 552,521 563,538 573,551 585,558 590,562 600,563 609,568 616,567 623,563 632,543 642,522
652,494 666,453 676,422 686,386 698,348 706,320 714,303 726,277 738,265 741,274 755,345 771,418 783,470 793,508 803,545 811,580
818,613 825,605 835,585 845,565 855,540 865,529 875,519 883,520 892,511 910,490 918,485 932,487 940,500 954,515 960,511 965,511
974,518 982,520 988,517 994,511 1001,507 1010,495 1017,482 1024,464 1030,455 1035,450 1050,451 1060,460 1070,477 1078,488
1085,504 1095,528 1104,557 1113,580 1122,588 1130,599 1140,616 1155,633 1166,642 1171,644 1177,650 1186,655 1193,652 1202,653
1210,649 1218,639 1235,638 1250,634 1258,630 1267,623 1275,627 1282,627 1295,637 1298,637 1310,626 1320,617 1328,611 1336,609
1347,611 1358,603 1372,570 1382,550 1395,500 1405,455 1411,431 1415,422 1424,391 1435,347 1439,336 1448,315 1455,295 1463,272
1470,267 1483,265 1488,268 1491,266 1498,254`;

// closed trades, drawn as short dashed segments
const buys = ['30,387 30,407', '542,510 542,518', '614,516 617,508 623,500', '626,482 631,425', '690,286 692,282', '702,210 706,234',
    '714,265 714,280', '715,252 722,245', '1010,396 1018,368', '1070,530 1070,543', '1074,542 1074,552', '1406,190 1411,280 1415,330 1419,350 1460,205', '1482,152 1482,174'];
const sells = ['110,716 113,765', '134,791 134,815', '238,652 245,665', '254,645 254,668 258,634', '454,492 454,495', '546,600 546,608',
    '922,482 922,485', '922,510 922,520', '1082,608 1086,602', '1094,610 1094,624', '1490,242 1490,262'];

const times = ['12 Aug 2025', '13 Aug 13:00', '14 Aug 05:00', '14 Aug 21:00', '15 Aug 13:00', '18 Aug 05:00', '18 Aug 21:00', '19 Aug 13:00',
    '20 Aug 05:00', '20 Aug 21:00', '21 Aug 13:00', '22 Aug 05:00', '24 Aug 21:00', '25 Aug 13:00', '26 Aug 05:00', '26 Aug 21:00',
    '27 Aug 13:00', '28 Aug 05:00', '28 Aug 21:00', '29 Aug 13:00', '1 Sep 05:00', '1 Sep 21:00', '2 Sep 13:00', '3 Sep 05:00'];
const sessions = [14, 110, 206, 290, 302, 398, 494, 590, 686, 770, 782, 878, 974, 1070, 1166, 1250, 1262, 1358, 1454, 1550];

const HEADER = 104; // height of everything above the chart
const TOP = 105;

function drawChart() {
    const svg = document.getElementById('plot');
    const right = svg.clientWidth - 53;
    const bottom = svg.clientHeight + HEADER - 21;
    let grid = '';
    let labels = '';
    let ticks = '';

    for (let x = 34; x < right; x += 32) {
        grid += `M${x + 0.5} ${TOP}V${bottom}`;
    }
    for (let i = 0; i < 22; i++) {
        const y = Math.round(115 + i * 32.95);
        const price = (149.15 - i * 0.135).toFixed(3);
        grid += `M3 ${y + 0.5}H${right}`;
        ticks += `M${right} ${y + 0.5}h5`;
        labels += `<text x="${right + 6}" y="${y + 4}">${price}</text>`;
    }
    times.forEach((time, i) => {
        const x = 2 + i * 64;
        ticks += `M${x + 0.5} ${bottom}v5`;
        labels += `<text x="${x}" y="${bottom + 13}">${time}</text>`;
    });

    let hollow = '';
    let filled = '';
    let wicks = '';
    candles.forEach((candle, i) => {
        const x = 2 + i * 4;
        const [high, top, low, end] = candle.slice(1).split(',').map(Number);
        wicks += `M${x + 0.5} ${high}V${end + 1}`;
        if (candle[0] === 'u' && low - top > 1) {
            hollow += `M${x - 0.5} ${top + 0.5}h2V${low + 0.5}h-2z`;
        } else {
            filled += `M${x - 1} ${top}h3V${low + 1}h-3z`;
        }
    });

    const lines = (list, color) => list.map(points =>
        `<polyline points="${points}" fill="none" stroke="${color}" stroke-dasharray="3 3"/>`).join('');
    const handle = (x, y) => `<rect x="${x - 6}" y="${y - 5}" width="12" height="11" fill="#000" stroke="#f00"/>`;

    svg.innerHTML = `
        <g transform="translate(0 ${-HEADER})" shape-rendering="crispEdges">
            <polyline points="1199,695 1293,695 1587,698" fill="none" stroke="#f00" stroke-width="5" stroke-linecap="round"/>
            <path d="M1287 693L1470 173" stroke="#f00" stroke-width="5"/>
            <path d="${grid}" stroke="#c0c0c0" stroke-dasharray="3 3"/>
            <path d="${sessions.map(x => `M${x + 0.5} ${TOP}V${bottom}`).join('')}" stroke="#000" stroke-dasharray="3 3"/>
            ${handle(1286, 693)}${handle(1378, 433)}${handle(1470, 173)}
            <path d="${wicks}" stroke="#000"/>
            <path d="${filled}" fill="#000"/>
            <path d="${hollow}" fill="#fff" stroke="#000"/>
            <polyline points="${average}" fill="none" stroke="#0000c8"/>
            ${lines(buys, '#0064b4')}${lines(sells, '#e63c14')}
            <path d="M3 232.5H${right}M3 234.5H${right}" stroke="#c0c0c0"/>
            <path d="M1494 106h9l-4.500 5z" fill="#c0c0c0"/>
            <path d="M2.500 ${bottom}V${TOP + 0.5}H${right + 0.5}V${bottom + 0.5}H2${ticks}" fill="none" stroke="#000"/>
            <rect x="${right + 3}" y="227" width="39" height="13" fill="#c0c0c0"/>
        </g>
        <g transform="translate(0 ${-HEADER})">
            ${labels}
            <text x="${right + 6}" y="238" fill="#fff">148.663</text>
        </g>`;
}

drawChart();
window.addEventListener('resize', drawChart);
```
